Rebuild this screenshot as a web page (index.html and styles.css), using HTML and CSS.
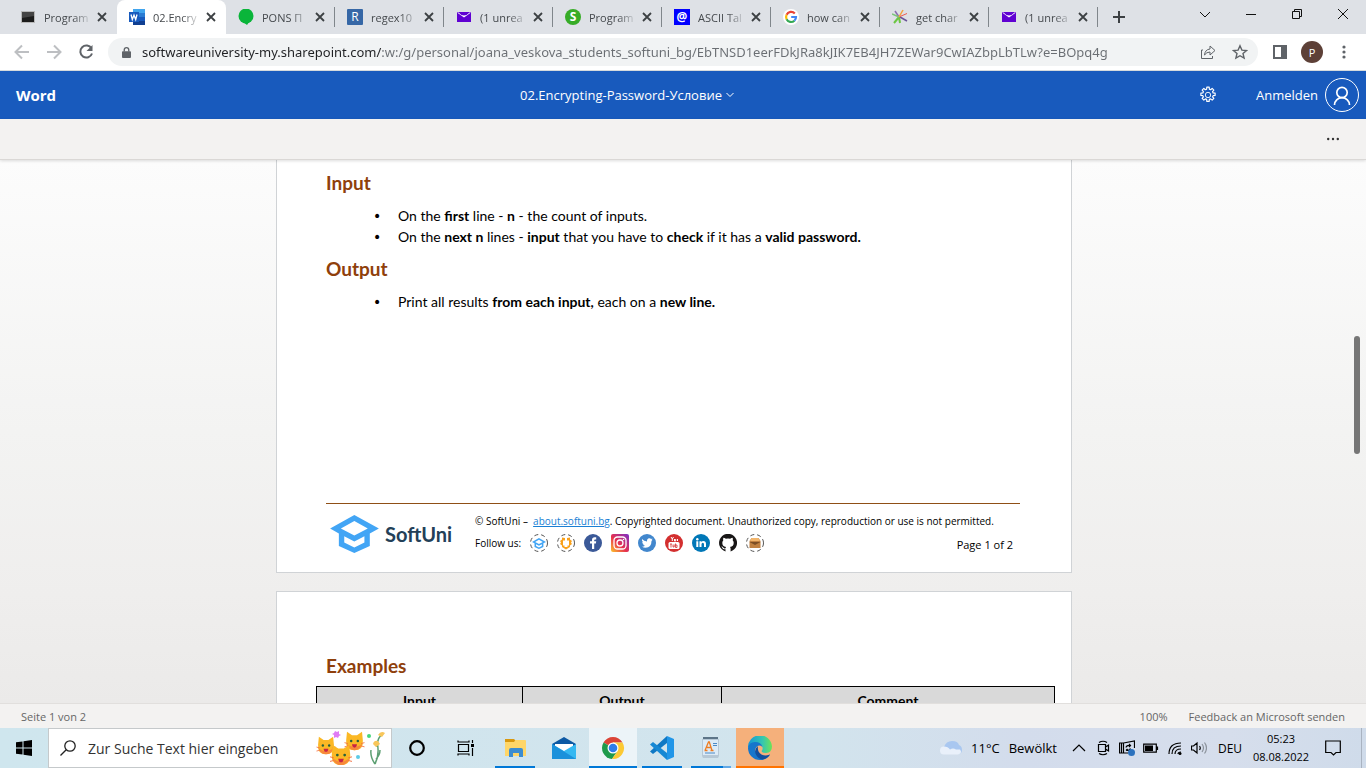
FILE: index.html
```html
<!DOCTYPE html>
<html lang="de">
<head>
<meta charset="utf-8">
<title>02.Encrypting-Password-Условие</title>
<link rel="stylesheet" href="styles.css">
</head>
<body>
<svg class="defs" aria-hidden="true">
  <symbol id="x" viewBox="0 0 10 10"><path d="M1 1l8 8M9 1l-8 8" stroke="#3c4043" stroke-width="1.8" fill="none"/></symbol>
  <symbol id="mail" viewBox="0 0 16 16"><path d="M1 3h14v10H1z" fill="#6001d2"/><path d="M1 3.500h1.500Q5 6.500 8 6.500t5.500-3H15L8 8.500z" fill="#fff"/></symbol>
  <symbol id="cap" viewBox="60 75 145 113"><path fill-rule="evenodd" d="M60 115L132 75L205 115L178 130V167L132 188L86 167V130zM92 115L132 136L172 115L132 93zM102 138V157L132 172L162 157V138L132 154z"/></symbol>
  <symbol id="dots" viewBox="0 0 18 18"><circle cx="9" cy="9" r="8.5" fill="#fff" stroke="#555" stroke-width="1" stroke-dasharray="4 3"/></symbol>
  <symbol id="cat" viewBox="0 0 24 24"><path d="M3 1l6 4h6l6-4 1 10q1 12-10 12T2 11z" fill="#fbb825"/><path d="M2.500 15q2.500 8 9.500 8t9.500-8q-4 4-9.500 4t-9.500-4z" fill="#f7883c"/><circle cx="8" cy="12" r="1.500" fill="#27613b"/><circle cx="16" cy="12" r="1.500" fill="#27613b"/><path d="M9 16h6q-.5 4-3 4t-3-4z" fill="#c92344"/><path d="M0 14l4 1M0 19l4-1M24 14l-4 1M24 19l-4-1" stroke="#f26b3a" stroke-width="1"/></symbol>
</svg>

<div class="tabs">
  <nav class="tablist">
    <div class="tab"><span class="fav"><svg viewBox="0 0 16 16"><path d="M1 2h14v12H1z" fill="#b8b8b8"/><path d="M2 3h12v10H2z" fill="#1c1c1c"/><path d="M2 3h12v4L2 9z" fill="#444"/></svg></span><button class="title">Program</button><button class="close" aria-label="Schließen"><svg><use href="#x"/></svg></button></div>
    <div class="tab active"><span class="fav"><svg viewBox="0 0 16 16"><path d="M4 0h12v4H4z" fill="#41a5ee"/><path d="M4 4h12v4H4z" fill="#2b7cd3"/><path d="M4 8h12v4H4z" fill="#185abd"/><path d="M4 12h12v4H4z" fill="#103f91"/><path d="M0 3h10v10H0z" fill="#185abd"/><path d="M2 5.500l1.300 5 1.700-4.500 1.700 4.500 1.300-5" stroke="#fff" stroke-width="1.300" fill="none"/></svg></span><button class="title">02.Encry</button><button class="close" aria-label="Schließen"><svg><use href="#x"/></svg></button></div>
    <div class="tab"><span class="fav"><svg viewBox="0 0 16 16"><circle cx="8" cy="7" r="7.500" fill="#0ab53a"/><path d="M5 13h6l-2 3z" fill="#0ab53a"/></svg></span><button class="title">PONS П</button><button class="close" aria-label="Schließen"><svg><use href="#x"/></svg></button></div>
    <div class="tab"><span class="fav letter regex">R</span><button class="title">regex10</button><button class="close" aria-label="Schließen"><svg><use href="#x"/></svg></button></div>
    <div class="tab"><span class="fav"><svg><use href="#mail"/></svg></span><button class="title">(1 unrea</button><button class="close" aria-label="Schließen"><svg><use href="#x"/></svg></button></div>
    <div class="tab"><span class="fav letter soft">S</span><button class="title">Program</button><button class="close" aria-label="Schließen"><svg><use href="#x"/></svg></button></div>
    <div class="tab"><span class="fav letter ascii">@</span><button class="title">ASCII Tal</button><button class="close" aria-label="Schließen"><svg><use href="#x"/></svg></button></div>
    <div class="tab"><span class="fav"><svg viewBox="0 0 16 16"><circle cx="8" cy="8" r="8" fill="#fff"/><g fill="none" stroke-width="2.200"><path d="M11.800 4.400A5 5 0 0 0 3.600 5.800" stroke="#ea4335"/><path d="M3.600 5.800a5 5 0 0 0 0 4.400" stroke="#fbbc05"/><path d="M3.600 10.200a5 5 0 0 0 7.800 1.500" stroke="#34a853"/><path d="M11.400 11.700A5 5 0 0 0 13 8H8.200" stroke="#4285f4"/></g></svg></span><button class="title">how can</button><button class="close" aria-label="Schließen"><svg><use href="#x"/></svg></button></div>
    <div class="tab"><span class="fav"><svg viewBox="0 0 16 16" fill="none" stroke-width="1.500"><path d="M7 8L2 14M7 8l1 6" stroke="#6cc644" stroke-width="2"/><path d="M7 8L3 2" stroke="#8b6bb1"/><path d="M7 8L0 5" stroke="#7ac57a"/><path d="M7 8l4-7" stroke="#f5a13c"/><path d="M8 8l7 4" stroke="#6a5497"/><path d="M8 7.500l7-3" stroke="#ee5a50" stroke-width="1"/></svg></span><button class="title">get char</button><button class="close" aria-label="Schließen"><svg><use href="#x"/></svg></button></div>
    <div class="tab"><span class="fav"><svg><use href="#mail"/></svg></span><button class="title">(1 unrea</button><button class="close" aria-label="Schließen"><svg><use href="#x"/></svg></button></div>
  </nav>
  <button class="newtab" aria-label="Neuer Tab"><svg viewBox="0 0 12 12"><path d="M6 0v12M0 6h12" stroke="#3c4043" stroke-width="2"/></svg></button>
  <div class="window-buttons">
    <button aria-label="Tabs suchen"><svg viewBox="0 0 12 12"><path d="M1 4l5 5 5-5" /></svg></button>
    <button aria-label="Minimieren"><svg viewBox="0 0 12 12"><path d="M1 6.500h10"/></svg></button>
    <button aria-label="Wiederherstellen"><svg viewBox="0 0 12 12"><path d="M1.500 3.500h7v7h-7zM3.500 3.500v-2h7v7h-2"/></svg></button>
    <button aria-label="Fenster schließen"><svg viewBox="0 0 12 12"><path d="M1 1l10 10M11 1L1 11"/></svg></button>
  </div>
</div>

<div class="toolbar">
  <button class="nav off" aria-label="Zurück"><svg viewBox="0 0 16 16"><path d="M15 8H2M8 1.500L1.500 8 8 14.500"/></svg></button>
  <button class="nav off" aria-label="Vor"><svg viewBox="0 0 16 16"><path d="M1 8h13M8 1.500L14.500 8 8 14.500"/></svg></button>
  <button class="nav" aria-label="Neu laden"><svg viewBox="0 0 16 16"><path d="M13.500 4.500A6 6 0 1 0 14 9.500"/><path d="M14.500 1v6h-6z" fill="#5f6368" stroke="none"/></svg></button>
  <div class="omnibox">
    <svg class="lock" viewBox="0 0 10 14"><path d="M2.500 6V4a2.500 2.500 0 0 1 5 0v2" fill="none" stroke="#5f6368" stroke-width="1.500"/><path d="M1 5.500h8q1 0 1 1V12q0 1-1 1H1q-1 0-1-1V6.500q0-1 1-1z" fill="#5f6368"/></svg>
    <input class="url" type="text" aria-label="Adresse" value="softwareuniversity-my.sharepoint.com/:w:/g/personal/joana_veskova_students_softuni_bg/EbTNSD1eerFDkJRa8kJIK7EB4JH7ZEWar9CwIAZbpLbTLw?e=BOpq4g">
    <button class="omni-btn" aria-label="Teilen"><svg viewBox="0 0 16 16"><path d="M3 6H1.500v8.500h11V12M4.500 11q.5-5.500 5.500-6V2l5 4.500-5 4.500V8q-3.500 0-5.500 3z"/></svg></button>
    <button class="omni-btn" aria-label="Lesezeichen"><svg viewBox="0 0 16 16"><path d="M8 1.800l1.900 4.300 4.600.4-3.500 3 1.100 4.600L8 11.700l-4.100 2.400L5 9.500l-3.500-3 4.600-.4z" stroke-width="1.400"/></svg></button>
  </div>
  <button class="side" aria-label="Seitenleiste"><svg viewBox="0 0 14 14"><path d="M1 1h12v12H1z" fill="#fff" stroke="#5f6368" stroke-width="2"/><path d="M8 1h5v12H8z" fill="#5f6368"/></svg></button>
  <button class="profile" aria-label="Profil">P</button>
  <button class="menu" aria-label="Menü"><svg viewBox="0 0 4 14" fill="#5f6368"><circle cx="2" cy="2" r="1.600"/><circle cx="2" cy="7" r="1.600"/><circle cx="2" cy="12" r="1.600"/></svg></button>
</div>

<header class="word">
  <a class="brand" href="#">Word</a>
  <button class="docname">02.Encrypting-Password-Условие <svg viewBox="0 0 8 6"><path d="M.5 1L4 4.500 7.500 1" fill="none" stroke="#fff"/></svg></button>
  <div class="account">
    <button class="gear" aria-label="Einstellungen"><svg viewBox="0 0 20 20" fill="none" stroke="#fff"><circle cx="10" cy="10" r="3"/><path stroke-width="1.300" stroke-linejoin="round" d="M8.500 3.500l.2-2.200h2.600l.2 2.200 1.400.6 1.700-1.400 1.900 1.900-1.400 1.700.6 1.400 2.200.2v2.600l-2.200.2-.6 1.400 1.400 1.700-1.900 1.900-1.700-1.400-1.400.6-.2 2.200H8.700l-.2-2.200-1.400-.6-1.700 1.400-1.900-1.900 1.400-1.700-.6-1.400-2.200-.2V7.900l2.200-.2.6-1.400-1.400-1.700 1.900-1.900 1.700 1.400z"/></svg></button>
    <a class="signin" href="#">Anmelden</a>
    <button class="avatar" aria-label="Konto"><svg viewBox="0 0 34 34" fill="none" stroke="#fff"><circle cx="17" cy="17" r="16.500"/><g stroke-width="1.700"><circle cx="17" cy="14.500" r="5.200"/><path d="M9.500 27a7.500 7.300 0 0 1 15 0"/></g></svg></button>
  </div>
</header>
<div class="ribbon"><button aria-label="Weitere Optionen"><svg viewBox="0 0 12 4" fill="#333"><circle cx="1.200" cy="2" r="1.200"/><circle cx="6" cy="2" r="1.200"/><circle cx="10.800" cy="2" r="1.200"/></svg></button></div>

<main class="canvas">
  <article class="page first">
    <h2>Input</h2>
    <ul>
      <li>On the <b>first</b> line - <b>n</b> - the count of inputs.</li>
      <li>On the <b>next n</b> lines - <b>input</b> that you have to <b>check</b> if it has a <b>valid password.</b></li>
    </ul>
    <h2>Output</h2>
    <ul>
      <li>Print all results <b>from each input,</b> each on a <b>new line.</b></li>
    </ul>
    <footer class="foot">
      <div class="logo"><svg viewBox="60 75 145 113" fill="#42a5f5"><use href="#cap" x="60" y="75" width="145" height="113"/></svg><span>SoftUni</span></div>
      <div class="legal">
        <p>© SoftUni –&nbsp; <a href="#">about.softuni.bg</a>. Copyrighted document. Unauthorized copy, reproduction or use is not permitted.</p>
        <div class="follow"><span>Follow us:</span>
          <div class="social">
            <a href="#" aria-label="SoftUni"><svg viewBox="0 0 18 18" fill="#42a5f5"><use href="#dots"/><use href="#cap" x="2" y="4" width="14" height="11"/></svg></a>
            <a href="#" aria-label="Foundation"><svg viewBox="0 0 18 18"><use href="#dots"/><path d="M5 3.500l3 .5v2.500H6v5h1.500v1.500h3v-1.500H12v-5h-2V4l3-.5v2l2 1.500-1 1.500 1 1.500-2 1.500v1.500l-4 2.500-4-2.500v-1.500L3 10l1-1.500L3 7l2-1.500z" fill="#f9a11b"/></svg></a>
            <a href="#" aria-label="Facebook"><svg viewBox="0 0 18 18"><circle cx="9" cy="9" r="9" fill="#3b5998"/><path d="M8 15V9.500H6V7.300h2V6q0-2.800 2.700-2.800h1.500v2.200h-1.100q-.9 0-.9.9v1h2l-.3 2.200h-1.700V15z" fill="#fff"/></svg></a>
            <a href="#" aria-label="Instagram"><svg viewBox="0 0 18 18"><defs><linearGradient id="ig" x1="0" y1="1" x2="1" y2="0"><stop offset="0" stop-color="#fdc52c"/><stop offset=".45" stop-color="#e6304f"/><stop offset="1" stop-color="#7a30c9"/></linearGradient></defs><rect width="18" height="18" rx="2" fill="url(#ig)"/><g fill="none" stroke="#fff" stroke-width="1.300"><rect x="3" y="3" width="12" height="12" rx="3.500"/><circle cx="9" cy="9" r="3"/></g><circle cx="12.500" cy="5.500" r=".8" fill="#fff"/></svg></a>
            <a href="#" aria-label="Twitter"><svg viewBox="0 0 18 18"><circle cx="9" cy="9" r="9" fill="#4287cd"/><path d="M4 5q2 2.300 5 2.400Q8.800 4.500 11.300 4.300q1.200 0 1.800.8l1.400-.5-.9 1.400 1-.2-1.100 1.100q0 6.500-6 6.800-2 0-3.500-1 1.800 0 3-.9-1.500-.2-2-1.600h.9Q4.200 9.700 4.200 8l.9.200Q3.500 6.800 4 5z" fill="#fff"/></svg></a>
            <a href="#" aria-label="YouTube"><svg viewBox="0 0 18 18"><circle cx="9" cy="9" r="9" fill="#d32f2f"/><path d="M5 8h8q1.500 0 1.500 1.500v4Q14.500 15 13 15H5q-1.500 0-1.500-1.500v-4Q3.500 8 5 8z" fill="#fff"/><path d="M6 3l1.300 2v2M8.500 3L7.300 5M9.500 5v2h1.200V5M12.500 5v2" stroke="#fff" fill="none"/><path d="M5 10h2M6 10v3.500M8 10.500v2.500h1.200v-2.500M10.500 9.500v4h1.500v-2.500h-1.500" stroke="#d32f2f" fill="none" stroke-width=".8"/></svg></a>
            <a href="#" aria-label="LinkedIn"><svg viewBox="0 0 18 18"><circle cx="9" cy="9" r="9" fill="#0077b7"/><g fill="#fff"><circle cx="5.300" cy="5.300" r="1.200"/><path d="M4.300 7.200h2V13h-2zM7.500 7.200h1.900V8q.7-1 1.900-1Q14 7 14 10v3h-2v-2.700q0-1.500-1.200-1.500T9.500 10.300V13h-2z"/></g></svg></a>
            <a href="#" aria-label="GitHub"><svg viewBox="0 0 18 18"><path d="M6.500 17.500v-2.300q-2.500.5-3.200-1.500l-1-1.200q1.300-.2 2 1 .9 1.300 2.200.7l.5-1.200Q3.300 12.500 3.300 8.800q0-1.500 1-2.500-.4-1.200.1-2.500 1 0 2.500 1 2.100-.5 4.200 0 1.500-1 2.500-1 .5 1.300.1 2.500 1 1 1 2.500 0 3.700-3.700 4.200.6.600.6 1.800v2.700A9 9 0 1 0 6.500 17.500z" fill="#181616"/></svg></a>
            <a href="#" aria-label="E-Mail"><svg viewBox="0 0 18 18"><use href="#dots"/><path d="M3.500 7l2-3h7l2 3v7h-11z" fill="#c08040"/><path d="M3.500 8h11L9 11z" fill="#7d4e24"/><path d="M5.500 4h7l1.500 3H4z" fill="#f2b56b"/></svg></a>
          </div>
          <span class="pageno">Page 1 of 2</span>
        </div>
      </div>
    </footer>
  </article>
  <article class="page second">
    <h2>Examples</h2>
    <table>
      <tr><th class="c1">Input</th><th class="c2">Output</th><th>Comment</th></tr>
    </table>
  </article>
  <div class="thumb"></div>
</main>

<div class="status"><span>Seite 1 von 2</span><button class="zoom">100%</button><a href="#">Feedback an Microsoft senden</a></div>

<div class="taskbar">
  <button class="start" aria-label="Start"><svg viewBox="0 0 16 16"><path d="M0 2.300L6.500 1.400v6.100H0zM7.500 1.200L16 0v7.500H7.500zM0 8.500h6.500v6.100L0 13.700zM7.500 8.500H16V16l-8.500-1.200z"/></svg></button>
  <label class="search">
    <svg class="glass" viewBox="0 0 16 16" fill="none" stroke="#222" stroke-width="1.300"><circle cx="10" cy="6" r="5.200"/><path d="M6.200 9.800L.5 15.500"/></svg>
    <input type="search" aria-label="Suche" placeholder="Zur Suche Text hier eingeben">
    <svg class="cats" viewBox="0 0 70 36"><use href="#cat" x="0" y="6" width="20" height="19"/><use href="#cat" x="28" y="1" width="21" height="20"/><use href="#cat" x="13" y="14" width="24" height="22"/><path d="M19 1l2 1 2-1v3l2 1-2 1-1 2-2-1-2 1v-3l-2-1 2-1z" fill="#e07cf5"/><circle cx="53" cy="6" r="2" fill="#46d67a"/><circle cx="42" cy="27" r="2" fill="#5ccbe8"/><path d="M59 34q5-10 2-22M61 17q0-10 6-13M59 34q-5-7-4-14M60 29q4-4 4-9" stroke="#5c9f72" stroke-width="1.500" fill="none"/><path d="M57 14q1-4 5-3l2 3-4 3zM62 5q3-5 7-2l-3 4z" fill="#f8c65a"/></svg>
  </label>
  <div class="apps">
    <button aria-label="Cortana"><svg viewBox="0 0 24 24"><circle cx="12" cy="12" r="6.800" fill="none" stroke="#000" stroke-width="2.200"/></svg></button>
    <button aria-label="Taskansicht"><svg viewBox="0 0 24 24" fill="none" stroke="#000" stroke-width="1.200"><path d="M4.500 8.500h10v7h-10zM4 4.500v1.500h11V4.500M4 19.500V18h11v1.500M18.500 4v3M18.500 12v8"/><path d="M17 8h3v3h-3z" fill="#000" stroke="none"/></svg></button>
    <button class="run" aria-label="Explorer"><svg viewBox="0 0 24 24"><path d="M2 3h9l2 2h9v4H2z" fill="#d9980f"/><path d="M2 6h9l1.500-2H22q1 0 1 1v15H2z" fill="#ffd668"/><path d="M6 14q0-2 2-2h10q2 0 2 2v7h-4v-4h-6v4H6z" fill="#3c8dd0"/></svg></button>
    <button aria-label="Mail"><svg viewBox="0 0 24 24"><path d="M0 8l12-7 12 7v4H0z" fill="#0c59a4"/><path d="M3 8h18v6l-9 5-9-5z" fill="#fff"/><path d="M0 8l12 7 12-7v15H0z" fill="#35b8f1"/><path d="M0 8l24 15H0z" fill="#1b91db"/></svg></button>
    <button class="run front" aria-label="Chrome"><svg viewBox="0 0 24 24"><path d="M12 12L2.500 6.500A11 11 0 0 1 21.500 6.500H12z" fill="#db4437"/><path d="M12 12L2.500 6.500A11 11 0 0 0 11 23l5.500-8z" fill="#1e9a4b"/><path d="M12 6.500h9.500A11 11 0 0 1 11 23l5.800-8.200z" fill="#fcc934"/><circle cx="12" cy="12" r="5.500" fill="#fff"/><circle cx="12" cy="12" r="4.300" fill="#2f7de9"/></svg></button>
    <button class="run" aria-label="Visual Studio Code"><svg viewBox="0 0 24 24"><path d="M17 0l7 3v18l-7 3z" fill="#2196e8"/><path d="M17 0v7L3 18 0 15.500z" fill="#0f78c4"/><path d="M17 24v-7L3 6 0 8.500z" fill="#1688d4"/></svg></button>
    <button class="run multi" aria-label="WordPad"><svg viewBox="0 0 24 24"><path d="M4 1h15v3H4z" fill="#5d7588"/><path d="M3 3h17v17l-1 2H4l-1-2z" fill="#b6c8d6"/><path d="M4 4h15v15H4z" fill="#dcebf7"/><path d="M6 14.500L9.500 6h.8L13 14.500M8 11.500h4M5.500 14.500h3M11.500 14.500h3" stroke="#ee7d22" stroke-width="1.300" fill="none"/><path d="M14 7.500h4M14 9.500h4M6 17h10" stroke="#4c8ac6"/></svg></button>
    <button class="run alert" aria-label="Edge"><svg viewBox="0 0 24 24"><defs><linearGradient id="eg"><stop offset="0" stop-color="#1597d7"/><stop offset=".6" stop-color="#34c6b1"/><stop offset="1" stop-color="#6ee356"/></linearGradient></defs><path d="M0 12A12 12 0 0 1 24 10.500q0 6-6 6.500-4 0-4.500-2 2-2 .5-5Q8 4 0 12z" fill="url(#eg)"/><path d="M0 12q1-6 7-6 6 0 7.500 5-4-3-6.500.5-2 4 1.500 7.500 5 4 12.500-.500-3.500 5.500-10 5.500A12 12 0 0 1 0 12z" fill="#1776cc"/><path d="M10 10q-4 3-2.500 7.500Q9.500 23 15 23.500q5-1.500 7-5-5 2-8.500 0Q9 15.500 10 10z" fill="#124f9d"/></svg></button>
  </div>
  <div class="tray">
    <button class="weather"><svg viewBox="0 0 22 14"><path d="M4 13a4 4 0 0 1 0-7q2-6 8-6t7 4q3 1 3 5t-4 4z" fill="#a9c7f0"/><path d="M4 13.500a4 4 0 0 1 0-8q4 0 6 3 3-2 6 0h4q3 4-2 5z" fill="#e9f0fa"/></svg><span>11°C</span><span>Bewölkt</span></button>
    <button aria-label="Ausgeblendete Symbole"><svg viewBox="0 0 16 16"><path d="M2 11l6-6 6 6"/></svg></button>
    <button aria-label="Kamera"><svg viewBox="0 0 16 16"><path d="M3.500 4.500h7v7h-7zM10.500 7l3-2v6l-3-2M4 2.500q4-2.500 8 0M4 13.500q4 2.500 8 0"/></svg></button>
    <button aria-label="Update"><svg viewBox="0 0 16 16"><path d="M15.500 8V1L4.500 3H.5v10H9M4.500 3v10M2.500 3v10M7 7.500q.5-2.500 4-2M10 4l1.500 1.500L10 7M11.500 8.500q-.5 2-4 2M8.500 9L7 10.500"/><circle cx="12.500" cy="12.500" r="3.500" fill="#2c72be" stroke="none"/></svg></button>
    <button aria-label="Akku"><svg viewBox="0 0 16 16"><path d="M.7 4.200h12.600v8H.7zM14.500 6.500v3.500"/><path d="M2 5.500h8v5.500H2z" fill="#000" stroke="none"/></svg></button>
    <button aria-label="WLAN"><svg viewBox="0 0 16 16"><path d="M2 14Q2 3 14 3M5 14q0-8 9-8M8 14q0-5 6-5M11 14q0-2 3-2"/><circle cx="13" cy="13.500" r="1.500" fill="#000" stroke="none"/></svg></button>
    <button aria-label="Lautstärke"><svg viewBox="0 0 16 16"><path d="M.5 6h2L6 3v10l-3.500-3h-2zM8.500 6q1.500 2 0 4"/><path d="M11 4q3 4 0 8M13.500 2.500q4 5.500 0 11" stroke="#8b929b"/></svg></button>
    <button class="lang">DEU</button>
    <button class="clock"><span>05:23</span><span>08.08.2022</span></button>
    <button class="note" aria-label="Benachrichtigungen"><svg viewBox="0 0 16 16"><path d="M.7 1h14.600v11.500H11L8.500 15 6 12.500H.7z"/></svg></button>
  </div>
</div>
</body>
</html>
```
FILE: styles.css
```css
* { box-sizing: border-box; }
body {
  margin: 0;
  height: 100vh;
  display: flex;
  flex-direction: column;
  overflow: hidden;
  font-family: "Open Sans", "Noto Sans", sans-serif;
  font-size: 12px;
  color: #000;
}
button {
  border: 0;
  padding: 0;
  background: none;
  font: inherit;
  color: inherit;
  display: flex;
  align-items: center;
  justify-content: center;
  white-space: nowrap;
}
a { color: inherit; text-decoration: none; }
svg { display: block; flex: none; }
.defs { position: absolute; width: 0; height: 0; }

.tabs { display: flex; height: 34px; flex: none; background: #dee1e6; color: #45494d; padding-left: 8px; }
.tablist { display: flex; flex: 0 1 1090px; min-width: 0; }
.tab { display: flex; align-items: center; flex: 1 1 0; min-width: 0; padding: 0 10px 0 12px; position: relative; }
.tab.active { background: #fff; border-radius: 8px 8px 0 0; }
.tab:nth-child(n+3)::after { content: ""; position: absolute; right: 0; top: 7px; width: 1px; height: 20px; background: #80868b; }
.fav { width: 16px; height: 16px; flex: none; }
.fav svg { width: 16px; height: 16px; }
.letter { color: #fff; font-size: 12px; line-height: 16px; text-align: center; }
.regex { background: #3667a6; border-radius: 1px; }
.soft { background: #37ac27; border-radius: 50%; font-weight: 700; }
.ascii { background: #00f; font-weight: 700; }
.title {
  flex: 1;
  min-width: 0;
  margin: 0 5px 0 8px;
  justify-content: flex-start;
  font-size: 11px;
  mask-image: linear-gradient(to right, #000 60%, #0003 92%);
}
.close svg { width: 10px; height: 10px; }
.newtab { width: 42px; }
.newtab svg { width: 12px; height: 12px; }
.window-buttons { display: flex; margin-left: auto; height: 28px; }
.window-buttons button { width: 46px; }
.window-buttons svg { width: 12px; height: 12px; fill: none; stroke: #111; }

.toolbar { display: flex; align-items: center; height: 37px; flex: none; background: #fff; border-bottom: 1px solid #d5dadd; padding: 0 20px 0 6px; }
.nav { width: 32px; }
.nav svg { width: 16px; height: 16px; fill: none; stroke: #5f6368; stroke-width: 2; }
.nav.off svg { stroke: #bdbfc2; }
.omnibox { flex: 1; min-width: 0; height: 28px; margin: 0 15px 0 6px; border-radius: 14px; background: #f1f3f4; display: flex; align-items: center; padding: 0 10px 0 14px; }
.lock { width: 9px; height: 13px; margin-right: 11px; }
.url {
  flex: 1;
  min-width: 0;
  border: 0;
  padding: 0;
  font: 13px "Noto Sans", sans-serif;
  background: linear-gradient(to right, #202124 239px, #6a6e73 239px);
  background-clip: text;
  -webkit-text-fill-color: transparent;
}
.omni-btn { width: 32px; }
.omni-btn:last-child { width: 16px; margin-left: 8px; }
.omni-btn svg { width: 16px; height: 16px; fill: none; stroke: #5f6368; stroke-width: 1; }
.side svg { width: 14px; height: 14px; }
.profile { width: 22px; height: 22px; border-radius: 50%; margin: 0 19px 0 14px; background: #5d4037; color: #fff; font-size: 11px; }
.menu svg { width: 4px; height: 14px; }

.word { display: grid; grid-template-columns: 1fr auto 1fr; align-items: center; height: 48px; flex: none; padding: 0 7px 0 16px; background: #185abd; color: #fff; font-size: 13px; }
.brand { font-size: 15px; font-weight: 700; }
.docname { font-size: 13px; gap: 4px; margin-right: 121px; }
.docname svg { width: 8px; height: 6px; }
.account { display: flex; align-items: center; justify-content: flex-end; }
.gear svg { width: 18px; height: 18px; }
.signin { margin: 0 7px 0 39px; }
.avatar svg { width: 34px; height: 34px; }
.ribbon { display: flex; justify-content: flex-end; align-items: center; height: 41px; flex: none; padding-right: 27px; background: #f3f2f1; border-bottom: 1px solid #dad8d6; box-shadow: 0 1px 3px #0002; z-index: 1; }
.ribbon svg { width: 12px; height: 4px; }

.canvas { position: relative; flex: 1; min-height: 0; overflow: hidden; padding-right: 18px; background: linear-gradient(#fcfcfc, #f3f3f2 50%, #efeeed 80%, #ebeae9); font-family: Lato, "Open Sans", sans-serif; }
.thumb { position: absolute; right: 6px; top: 176px; width: 6px; height: 118px; border-radius: 3px; background: #767676; }
.page { width: 796px; max-width: 100%; margin: 0 auto 18px; background: #fff; border: 1px solid #d0d3d6; padding: 0 51px 0 49px; }
.first { border-top: 0; padding-top: 11px; }
.second { padding-top: 62px; height: 400px; }
h2 { margin: 0; font-size: 19px; line-height: 24px; font-weight: 700; color: #8f400b; }
ul { margin: 10px 0; padding: 0 0 0 47px; list-style: none; font-size: 14px; line-height: 21px; }
li::before { content: "•"; display: inline-block; width: 25px; font-family: "DejaVu Sans", sans-serif; line-height: 16px; }
.foot { display: flex; margin-top: 191px; height: 69px; border-top: 1px solid #8f4f16; }
.logo { display: flex; align-items: center; width: 149px; height: 38px; margin-top: 11px; padding-left: 4px; gap: 6px; color: #234058; font-size: 20px; font-weight: 700; }
.logo svg { width: 49px; height: 38px; }
.legal { flex: 1; min-width: 0; font-size: 10px; }
.legal p { margin: 9px 0 5px; line-height: 16px; white-space: nowrap; font-family: "Open Sans", sans-serif; }
.legal p a { color: #1a7fd4; text-decoration: underline; }
.follow { display: flex; align-items: center; font-family: "Open Sans", sans-serif; }
.social { display: flex; gap: 9px; margin-left: 9px; }
.social svg { width: 18px; height: 18px; }
.pageno { margin-left: auto; margin-right: 7px; padding-top: 3px; font-size: 11px; }
table { width: 739px; margin: 8px 0 0 -10px; border-collapse: collapse; table-layout: fixed; }
th { border: 1px solid #000; background: #d9d9d9; padding: 3px 0; font-size: 14px; line-height: 21px; }
.c1 { width: 206px; }
.c2 { width: 199px; }

.status { display: flex; align-items: center; height: 25px; flex: none; padding: 0 21px; background: #f3f2f1; border-top: 1px solid #e1dfdd; color: #666; font-size: 11px; z-index: 1; }
.zoom { margin: 0 21px 0 auto; }

.taskbar { display: flex; height: 40px; flex: none; background: linear-gradient(to right, #cfe6ee, #d2e4ed 60%, #d3dcec 75%, #d6deec 90%, #cfdbea); }
.start { width: 48px; }
.start svg { width: 16px; height: 16px; }
.search { display: flex; align-items: center; flex: 0 1 344px; background: #fff; border: 1px solid #c5c9cb; padding: 0 5px 0 11px; }
.glass { width: 16px; height: 16px; }
.search input { flex: 1; min-width: 0; border: 0; padding: 0; margin-left: 12px; outline: 0; background: none; font: 14px "Open Sans", sans-serif; color: #333; }
.search input::placeholder { color: #333; opacity: 1; }
.cats { width: 70px; height: 36px; }
.apps { display: flex; gap: 1px; margin-left: 1px; }
.apps button { width: 48px; position: relative; }
.apps svg { width: 24px; height: 24px; }
.run::after { content: ""; position: absolute; left: 4px; right: 4px; bottom: 0; height: 2px; background: #0078d7; }
.front { background: #ecf4f8; }
.multi::after { background: linear-gradient(to right, #0078d7 80%, #62a9e6 80%); }
.alert { background: #f5b07b; }
.front::after, .alert::after { left: 0; right: 0; }
.alert::after { background: #ff7300; }
.tray { display: flex; align-items: stretch; margin-left: auto; border-right: 1px solid #a9b3c1; margin-right: 4px; }
.tray button { width: 24px; }
.tray svg { width: 16px; height: 16px; fill: none; stroke: #000; stroke-width: 1.2px; }
.tray .weather { width: auto; gap: 9px; margin-right: 10px; font-size: 13px; }
.tray .weather svg { width: 22px; height: 14px; stroke: none; }
.tray .lang { width: 38px; font-size: 12px; }
.tray .clock { width: 64px; flex-direction: column; font-size: 11px; line-height: 18px; }
.tray .note { width: 40px; margin-right: 8px; }
```
